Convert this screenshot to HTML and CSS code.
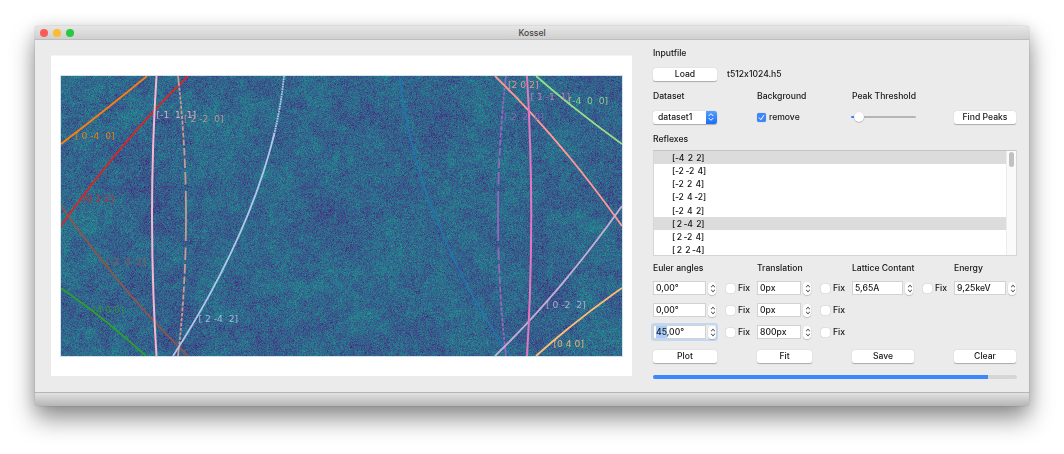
FILE: index.html
```html
<!DOCTYPE html>
<html lang="en">
<head>
<meta charset="utf-8">
<title>Kossel</title>
<link rel="stylesheet" href="styles.css">
</head>
<body>
<main class="window">
  <header class="titlebar">
    <div class="lights"><i class="light close"></i><i class="light min"></i><i class="light max"></i></div>
    <h1 class="title">Kossel</h1>
  </header>
  <div class="content">
    <section class="figure">
      <div class="plot">
        <canvas class="noise" id="noise" width="561" height="280"></canvas>
        <svg class="lines" viewBox="61 76 561 280" width="561" height="280">
          <g fill="none" stroke-width="1.8">
            <path stroke="#1f77b4" stroke-width="1.4" d="M399.500 76Q415 216 510 356"/>
            <path stroke="#ff7f0e" d="M61 144Q107 109 147 76"/>
            <path stroke="#d62728" d="M61 226Q122 140 188 76"/>
            <path stroke="#2ca02c" d="M61 288Q107 320 146 356"/>
            <path stroke="#8c564b" d="M61 206Q122 292 188 356"/>
            <path stroke="#c49c94" class="dash" d="M186 216Q186 146 178 76"/>
            <path stroke="#c49c94" class="dash" d="M186 216Q186 286 178 356"/>
            <path stroke="#f7b6d2" stroke-width="2" d="M156.500 76Q147.500 216 156.500 356"/>
            <path stroke="#aec7e8" class="dots" d="M284 76Q281 107 273 139"/>
            <path stroke="#aec7e8" d="M274.500 133Q249 238 173 356"/>
            <path stroke="#9467bd" class="dash" d="M498 216Q498 146 506 76"/>
            <path stroke="#9467bd" class="dash" d="M498 216Q498 286 506 356"/>
            <path stroke="#ff9896" d="M495 76Q561 140 622 226"/>
            <path stroke="#c5b0d5" d="M622 206Q561 292 495 356"/>
            <path stroke="#e377c2" stroke-width="2" d="M527 76Q535.500 216 527 356"/>
            <path stroke="#98df8a" d="M536 76Q576 111 622 144"/>
            <path stroke="#ffbb78" d="M622 288Q576 320 536 356"/>
          </g>
          <g class="tags">
            <text x="75" y="138.500" fill="#ff7f0e">[ 0 -4  0]</text>
            <text x="83" y="202" fill="#d62728">[0 2 2]</text>
            <text x="156.500" y="118" fill="#f7b6d2">[-1  1  1]</text>
            <text x="184" y="122" fill="#c49c94">[ 2 -2  0]</text>
            <text x="106" y="265" fill="#96584d">[-2  0  2]</text>
            <text x="93" y="313" fill="#2ca02c">[4 0 0]</text>
            <text x="198.500" y="322" fill="#aec7e8">[ 2 -4  2]</text>
            <text x="508" y="88" fill="#ff9896">[2 0 2]</text>
            <text x="530.500" y="99.500" fill="#e377c2">[ 1 -1  1]</text>
            <text x="568.500" y="104" fill="#98df8a">[-4  0  0]</text>
            <text x="504" y="119.500" fill="#9467bd">[-2  2  0]</text>
            <text x="546" y="308" fill="#c5b0d5">[ 0 -2  2]</text>
            <text x="553.500" y="346.500" fill="#ffbb78">[0 4 0]</text>
          </g>
        </svg>
      </div>
    </section>

    <section class="controls">
      <div class="row h18"><span>Inputfile</span></div>
      <div class="row h24 file"><button class="btn">Load</button><span>t512x1024.h5</span></div>
      <div class="row h19"><span>Dataset</span><span>Background</span><span>Peak Threshold</span></div>
      <div class="row h24">
        <div class="select"><span>dataset1</span><b class="arrows"><svg viewBox="0 0 10 14" width="10" height="14"><path d="M3 5.700 5 3.700 7 5.700M3 8.300 5 10.300 7 8.300"/></svg></b></div>
        <div class="check-item"><i class="check on"><svg viewBox="0 0 9 9" width="9" height="9"><path d="M2.200 4.800 3.900 6.700 6.800 2.300"/></svg></i><span>remove</span></div>
        <div class="slider"><i class="knob"></i></div>
        <button class="btn wide">Find Peaks</button>
      </div>
      <div class="row h20"><span>Reflexes</span></div>
      <div class="list">
        <ul class="items">
          <li class="picked">[-4  2  2]</li>
          <li>[-2 -2  4]</li>
          <li>[-2  2  4]</li>
          <li>[-2  4 -2]</li>
          <li>[-2  4  2]</li>
          <li class="picked">[ 2 -4  2]</li>
          <li>[ 2 -2  4]</li>
          <li>[ 2  2 -4]</li>
        </ul>
        <div class="scroll"><i class="thumb"></i></div>
      </div>
      <div class="row h18 headings"><span>Euler angles</span><span>Translation</span><span>Lattice Contant</span><span>Energy</span></div>
      <div class="row h22">
        <div class="spin"><span class="field">0,00°</span><i class="step"></i><i class="check"></i><span>Fix</span></div>
        <div class="spin w44"><span class="field">0px</span><i class="step"></i><i class="check"></i><span>Fix</span></div>
        <div class="spin w51"><span class="field">5,65A</span><i class="step"></i><i class="check"></i><span>Fix</span></div>
        <div class="spin w52"><span class="field">9,25keV</span><i class="step"></i></div>
      </div>
      <div class="row h22">
        <div class="spin"><span class="field">0,00°</span><i class="step"></i><i class="check"></i><span>Fix</span></div>
        <div class="spin w44"><span class="field">0px</span><i class="step"></i><i class="check"></i><span>Fix</span></div>
      </div>
      <div class="row h22">
        <div class="spin"><span class="focus"><span class="field"><mark>45</mark>,00°</span><i class="step"></i></span><i class="check"></i><span>Fix</span></div>
        <div class="spin w44"><span class="field">800px</span><i class="step"></i><i class="check"></i><span>Fix</span></div>
      </div>
      <div class="row actions"><button class="btn">Plot</button><button class="btn fit">Fit</button><button class="btn wide">Save</button><button class="btn wide">Clear</button></div>
      <div class="progress"><i class="bar"></i></div>
    </section>
  </div>
  <footer class="statusbar"></footer>
</main>
<script src="noise.js"></script>
</body>
</html>
```
FILE: styles.css
```css
* { box-sizing: border-box; }
body {
  margin: 0;
  height: 454px;
  overflow: hidden;
  background: #fff;
  padding: 26px 35px;
  font: 500 8.6px/12px Inter, "Liberation Sans", sans-serif;
  font-feature-settings: "calt" 0;
  color: #161616;
}
.window {
  width: 994px;
  height: 380px;
  display: flex;
  flex-direction: column;
  background: #ebebeb;
  border-radius: 3px 3px 4px 4px;
  box-shadow: 0 0 1px rgba(0,0,0,.5), 0 13px 25px rgba(0,0,0,.42), 0 2px 16px rgba(0,0,0,.12);
}
.titlebar {
  height: 14px;
  display: grid;
  grid-template-columns: 60px 1fr 60px;
  align-items: center;
  background: linear-gradient(#e6e6e6, #cfcfcf);
  border-bottom: 1px solid #bdbdbd;
  border-radius: 3px 3px 0 0;
}
.lights { display: flex; gap: 5px; padding-left: 5px; }
.light { width: 8px; height: 8px; border-radius: 50%; }
.close { background: #fc5b57; }
.min { background: #fdbc2e; }
.max { background: #28c840; }
.title { margin: 0; padding-top: 1px; font-size: 8.6px; line-height: 13px; font-weight: 500; text-align: center; color: #444; }
.content { height: 352px; display: flex; align-items: flex-start; padding: 0 12px 0 16px; }
.figure {
  width: 581px;
  height: 321px;
  margin: 15px 21px 0 0;
  padding: 21px 10px 0;
  background: #fff;
  border-top: 1px solid #f5f5f5;
}
.plot { display: grid; width: 561px; height: 280px; margin-top: -1px; }
.noise, .lines { grid-area: 1 / 1; display: block; }
.lines { z-index: 1; }
.noise { background: #30608c; outline: 1px solid rgba(190,215,225,.7); outline-offset: -.5px; }
.dash { stroke-dasharray: 25 6.500 12.500 4 9.500 3 7.500 2.500 6 2 5 2 4.500 1.500 4 1.500 3.500 1.500 3.500 1.500 3.500 1.500 3 1.500 3 1.500 3 1.500 3 1.500; }
.dots { stroke-dasharray: 1.8 .7; }
.tags text { font: 400 9.2px "DejaVu Sans", sans-serif; white-space: pre; opacity: .88; }

.controls { width: 364px; padding-top: 4px; display: flex; flex-direction: column; }
.row {
  display: grid;
  grid-template-columns: 104px 95px 102px 63px;
  align-items: center;
  white-space: nowrap;
}
.h18 { height: 18px; }
.h19 { height: 19px; }
.h20 { height: 21px; padding-bottom: 1px; }
.h22 { height: 22px; }
.h24 { height: 24px; }
.file { grid-template-columns: 64px 1fr; gap: 10px; }
.headings { margin-top: 3px; }
.actions { height: 25px; padding-top: 1px; }
.btn {
  width: 64px;
  height: 13px;
  padding: 0;
  border: 0;
  border-radius: 2.5px;
  background: #fff;
  box-shadow: 0 .5px 1px rgba(0,0,0,.28);
  font: inherit;
  color: inherit;
}
.btn.fit { width: 55px; }
.btn.wide { width: 62px; }
.select {
  width: 64px;
  height: 13px;
  display: flex;
  justify-content: space-between;
  align-items: center;
  padding-left: 5px;
  background: #fff;
  border-radius: 2.5px;
  box-shadow: 0 .5px 1px rgba(0,0,0,.28);
}
.arrows { width: 11px; height: 13px; display: flex; align-items: center; border-radius: 0 2.5px 2.5px 0; background: linear-gradient(#559ffb, #1a6cf8); }
.arrows path, .check path { fill: none; stroke: #fff; stroke-width: 1; stroke-linecap: round; stroke-linejoin: round; }
.check-item { display: flex; align-items: center; gap: 3px; }
.check { width: 9px; height: 9px; flex: none; border-radius: 2px; background: #fff; box-shadow: 0 0 1px rgba(0,0,0,.4); }
.check.on { background: #3b87fb; }
.check svg { display: block; }
.slider { width: 65px; height: 2px; margin-left: -1px; display: flex; align-items: center; border-radius: 1px; background: linear-gradient(90deg, #3b87fb 5px, #b5b5b5 5px); }
.knob { width: 10px; height: 10px; margin-left: 3px; border-radius: 50%; background: #fff; box-shadow: 0 .5px 1px rgba(0,0,0,.4); }

.list { height: 106px; display: flex; overflow: hidden; background: #fff; border: 1px solid #d5d5d5; border-top-color: #c4c4c4; }
.items { flex: 1; margin: 0; padding: 0; list-style: none; }
.items li { height: 13.15px; padding-left: 18px; line-height: 14.6px; white-space: pre; letter-spacing: -.16px; word-spacing: -.45px; }
.items .picked { background: #dcdcdc; }
.scroll { width: 10px; padding: 1px 2px; background: #fafafa; border-left: 1px solid #ececec; }
.thumb { display: block; width: 5px; height: 15px; border-radius: 3px; background: #c1c1c1; }

.spin, .focus { display: flex; align-items: center; }
.field { width: 53px; height: 14px; flex: none; padding-left: 2px; line-height: 13px; background: #fff; border: 1px solid #d2d2d2; }
.w44 .field { width: 44px; }
.w51 .field { width: 51px; }
.w52 .field { width: 52px; }
.step { position: relative; width: 8px; height: 13px; flex: none; margin: 0 10px 0 2px; border-radius: 3.5px; background: #fff; box-shadow: 0 .5px 1px rgba(0,0,0,.35); }
.step::before, .step::after {
  content: "";
  position: absolute;
  left: 2.5px;
  width: 3px;
  height: 3px;
  border: solid #444;
  border-width: 1px 0 0 1px;
  transform: rotate(45deg) scale(.8);
}
.step::before { top: 3px; }
.step::after { bottom: 3px; transform: rotate(225deg) scale(.8); }
.spin .check { margin-right: 3px; }
.focus { border-radius: 1.5px; box-shadow: 0 0 0 2px #c3d6f3; width: 63px; margin-right: 10px; }
.focus .step { margin-right: 0; }
mark { background: #a9cdfa; color: inherit; padding: 1px 0; }

.progress { height: 4px; margin-top: 7px; border-radius: 2px; background: #d6d6d6; overflow: hidden; }
.bar { display: block; width: 92%; height: 4px; background: #3b87fb; }
.statusbar { height: 14px; background: linear-gradient(#e2e2e2, #b5b5b5); border-top: 1px solid #b5b5b5; border-radius: 0 0 4px 4px; }
```
FILE: noise.js
```js
// Fills the plot with a noisy detector intensity map in the viridis palette.
const canvas = document.getElementById('noise');
const ctx = canvas.getContext('2d');
const W = canvas.width, H = canvas.height;
let seed = 12345;
function rnd() {
  seed = (seed + 0x6D2B79F5) | 0;
  let t = Math.imul(seed ^ (seed >>> 15), 1 | seed);
  t = (t + Math.imul(t ^ (t >>> 7), 61 | t)) ^ t;
  return ((t ^ (t >>> 14)) >>> 0) / 4294967296;
}
const stops = [[68,1,84],[71,39,119],[62,73,137],[48,103,141],[37,130,142],[31,158,137],[53,183,121],[109,205,89],[180,222,44],[253,231,37]];
function viridis(v) {
  const p = Math.max(0, Math.min(.999, v)) * 9, i = Math.floor(p), f = p - i;
  return stops[i].map((c, k) => c + (stops[i + 1][k] - c) * f);
}
function layer(cell) {
  const gw = Math.ceil(W / cell) + 2, g = [];
  for (let i = 0; i < gw * (Math.ceil(H / cell) + 2); i++) g.push(rnd() - .5);
  return (x, y) => {
    const u = x / cell, v = y / cell, i = Math.floor(u), j = Math.floor(v), a = u - i, b = v - j;
    const k = j * gw + i;
    return (g[k] * (1 - a) + g[k + 1] * a) * (1 - b) + (g[k + gw] * (1 - a) + g[k + gw + 1] * a) * b;
  };
}
const broad = layer(38), mid = layer(14), fine = layer(5);
const img = ctx.createImageData(W, H);
for (let y = 0; y < H; y++) {
  for (let x = 0; x < W; x++) {
    const grain = (rnd() + rnd() + rnd() - 1.5) * .145;
    const c = viridis(.325 + grain + broad(x, y) * .06 + mid(x, y) * .09 + fine(x, y) * .08);
    const o = (y * W + x) * 4;
    img.data[o] = c[0];
    img.data[o + 1] = c[1];
    img.data[o + 2] = c[2];
    img.data[o + 3] = 255;
  }
}
ctx.putImageData(img, 0, 0);
```
